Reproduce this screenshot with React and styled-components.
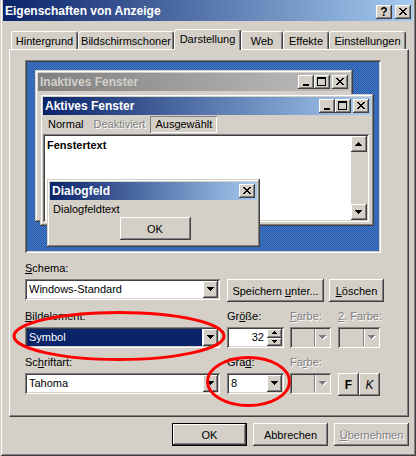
import React from "react";
import styled, { createGlobalStyle, css } from "styled-components";

const FACE = "#d4d0c8";
const NAVY = "#0a246a";

const GlobalStyle = createGlobalStyle`
  * { box-sizing: border-box; }
  html, body { margin: 0; padding: 0; background: ${FACE}; }
  body {
    font-family: "Liberation Sans", Arial, sans-serif;
    font-size: 11px;
    color: #000;
  }
`;

// classic 3d edges
const raised = css`
  background: ${FACE};
  box-shadow: inset -1px -1px #404040, inset 1px 1px #fff,
    inset -2px -2px #808080, inset 2px 2px ${FACE};
`;
const sunken = css`
  box-shadow: inset 1px 1px #808080, inset -1px -1px #fff,
    inset 2px 2px #404040, inset -2px -2px ${FACE};
`;
const frame = css`
  background: ${FACE};
  box-shadow: inset -1px -1px #404040, inset 1px 1px ${FACE},
    inset -2px -2px #808080, inset 2px 2px #fff;
`;
const disabledText = css`
  color: #808080;
  text-shadow: 1px 1px #fff;
`;

const Window = styled.div`
  position: relative;
  width: 416px;
  height: 456px;
  background: ${FACE};
  padding: 0 3px 3px;
  box-shadow: inset 1px 0 ${FACE}, inset -1px 0 #404040, inset 0 -1px #404040,
    inset 2px 0 #fff, inset -2px 0 #808080, inset 0 -2px #808080;
  display: flex;
  flex-direction: column;
  overflow: hidden;
`;

const Caption = styled.div`
  display: flex;
  align-items: center;
  flex: none;
  height: ${(p) => p.$h}px;
  padding: 0 2px 0 ${(p) => p.$pl}px;
  background: ${(p) =>
    p.$inactive
      ? "linear-gradient(to right, #808080, #c0c0c0)"
      : `linear-gradient(to right, ${NAVY}, #a6caf0)`};
  color: ${(p) => (p.$inactive ? FACE : "#fff")};
  font-weight: bold;
  font-size: 12px;
  white-space: nowrap;
  overflow: hidden;
`;

const CaptionText = styled.span`
  flex: 1;
  overflow: hidden;
`;

const CaptionButtons = styled.div`
  display: flex;
  align-self: ${(p) => (p.$bottom ? "flex-end" : "center")};
  margin-bottom: ${(p) => (p.$bottom ? 2 : 0)}px;
`;

const CapButton = styled.div`
  width: 16px;
  height: 14px;
  ${raised};
  display: flex;
  align-items: center;
  justify-content: center;
  margin-left: ${(p) => p.$gap || 0}px;
  color: #000;
  font-size: 12px;
  line-height: 1;
`;

const Body = styled.div`
  display: flex;
  flex-direction: column;
  padding: 8px 4px 0 6px;
`;

const TabStrip = styled.div`
  position: relative;
  z-index: 1;
  display: flex;
  align-items: flex-end;
  height: 20px;
  padding-left: 2px;
`;

const Tab = styled.div`
  width: ${(p) => p.$w}px;
  height: ${(p) => (p.$active ? 21 : 18)}px;
  margin-bottom: ${(p) => (p.$active ? -1 : 0)}px;
  padding-bottom: ${(p) => (p.$active ? 3 : 0)}px;
  background: ${FACE};
  border-top: 1px solid #fff;
  border-left: 1px solid #fff;
  border-right: 1px solid #404040;
  border-radius: 3px 3px 0 0;
  box-shadow: inset -1px 0 #808080;
  display: flex;
  align-items: center;
  justify-content: center;
  white-space: nowrap;
`;

const Panel = styled.div`
  height: 368px;
  background: ${FACE};
  border: 1px solid #404040;
  border-top-color: #fff;
  border-left-color: #fff;
  box-shadow: inset -1px -1px #808080;
  padding: 10px 0 0 15px;
`;

const Preview = styled.div`
  position: relative;
  width: 356px;
  height: 193px;
  background-color: #3468b8;
  background-image: repeating-conic-gradient(#2a5cab 0 25%, #4078c6 0 50%);
  background-size: 2px 2px;
  overflow: hidden;
  &::after {
    content: "";
    position: absolute;
    inset: 0;
    ${sunken};
    pointer-events: none;
  }
`;

const MiniWindow = styled.div`
  position: absolute;
  left: ${(p) => p.$x}px;
  top: ${(p) => p.$y}px;
  width: ${(p) => p.$w}px;
  height: ${(p) => p.$h}px;
  ${frame};
  padding: 3px;
  display: flex;
  flex-direction: column;
  overflow: hidden;
`;

const MenuBar = styled.div`
  display: flex;
  align-items: center;
  height: 19px;
  flex: none;
`;

const MenuItem = styled.span`
  padding: 2px 5px;
  line-height: 13px;
  ${(p) => p.$disabled && disabledText};
  ${(p) =>
    p.$selected &&
    css`
      box-shadow: inset 1px 1px #808080, inset -1px -1px #fff;
    `};
`;

const Client = styled.div`
  flex: 1;
  margin: 0 2px 1px 0;
  background: #fff;
  ${sunken};
  padding: 2px;
  display: flex;
`;

const ClientText = styled.div`
  flex: 1;
  font-weight: bold;
  padding: 3px 2px;
`;

const ScrollBar = styled.div`
  width: 16px;
  display: flex;
  flex-direction: column;
  justify-content: space-between;
  background: ${FACE};
`;

const ScrollButton = styled.div`
  width: 16px;
  height: 16px;
  ${raised};
  display: flex;
  align-items: center;
  justify-content: center;
`;

const DialogBody = styled.div`
  display: flex;
  flex-direction: column;
  padding: 3px 0 0 3px;
`;

const PushButton = styled.div`
  width: ${(p) => p.$w}px;
  height: 23px;
  flex: none;
  margin-left: ${(p) => p.$ml || 0}px;
  align-self: ${(p) => (p.$center ? "center" : "auto")};
  ${raised};
  ${(p) =>
    p.$default &&
    css`
      box-shadow: inset 0 0 0 1px #000, inset -2px -2px #404040,
        inset 2px 2px #fff, inset -3px -3px #808080;
    `};
  display: flex;
  align-items: center;
  justify-content: center;
  white-space: nowrap;
  ${(p) => p.$disabled && disabledText};
  font-weight: ${(p) => (p.$bold ? "bold" : "normal")};
  font-style: ${(p) => (p.$italic ? "italic" : "normal")};
  font-size: ${(p) => (p.$big ? 12 : 11)}px;
`;

const Row = styled.div`
  display: flex;
  align-items: flex-start;
  margin-top: ${(p) => p.$mt}px;
`;

const Field = styled.div`
  display: flex;
  flex-direction: column;
  width: ${(p) => p.$w}px;
  margin-left: ${(p) => p.$ml || 0}px;
`;

const Label = styled.div`
  height: 17px;
  line-height: 13px;
  white-space: nowrap;
  ${(p) => p.$disabled && disabledText};
`;

const Combo = styled.div`
  height: 21px;
  background: ${(p) => (p.$disabled ? FACE : "#fff")};
  ${sunken};
  padding: 2px;
  display: flex;
`;

const ComboText = styled.div`
  flex: 1;
  line-height: 17px;
  padding-left: 2px;
  margin-right: 1px;
  white-space: nowrap;
  ${(p) =>
    p.$selected &&
    css`
      background: ${NAVY};
      color: #fff;
    `};
`;

const DropButton = styled.div`
  width: 15px;
  height: 17px;
  flex: none;
  display: flex;
  align-items: center;
  justify-content: center;
  ${(p) =>
    p.$disabled
      ? css`
          box-shadow: inset 1px 0 #808080, inset 2px 0 #fff;
          padding-left: 2px;
        `
      : raised};
`;

const SpinValue = styled.div`
  flex: 1;
  text-align: right;
  line-height: 17px;
  padding-right: 3px;
`;

const SpinButtons = styled.div`
  width: 15px;
  display: flex;
  flex-direction: column;
`;

const SpinButton = styled.div`
  flex: 1;
  ${raised};
  display: flex;
  align-items: center;
  justify-content: center;
`;

const ButtonRow = styled.div`
  display: flex;
  justify-content: flex-end;
  gap: 6px;
  margin-top: 6px;
`;

const Annotations = styled.svg`
  position: absolute;
  left: 0;
  top: 0;
  pointer-events: none;
`;

const GLYPHS = {
  min: { w: 8, h: 9, d: "M1 7h6v2H1z" },
  max: { w: 9, h: 9, d: "M0 0h9v2H0z M0 2h1v7H0z M8 2h1v7H8z M1 8h7v1H1z" },
  close: {
    w: 8,
    h: 7,
    d: "M0 0h2v1H0z M6 0h2v1H6z M1 1h2v1H1z M5 1h2v1H5z M2 2h4v1H2z M3 3h2v1H3z M2 4h4v1H2z M1 5h2v1H1z M5 5h2v1H5z M0 6h2v1H0z M6 6h2v1H6z",
  },
  down: { w: 7, h: 4, d: "M0 0h7v1H0z M1 1h5v1H1z M2 2h3v1H2z M3 3h1v1H3z" },
  up: { w: 7, h: 4, d: "M3 0h1v1H3z M2 1h3v1H2z M1 2h5v1H1z M0 3h7v1H0z" },
  smallUp: { w: 5, h: 3, d: "M2 0h1v1H2z M1 1h3v1H1z M0 2h5v1H0z" },
  smallDown: { w: 5, h: 3, d: "M0 0h5v1H0z M1 1h3v1H1z M2 2h1v1H2z" },
};

function Glyph({ kind, disabled }) {
  const g = GLYPHS[kind];
  return (
    <svg width={g.w + 1} height={g.h + 1} viewBox={`0 0 ${g.w + 1} ${g.h + 1}`} shapeRendering="crispEdges">
      {disabled && <path d={g.d} fill="#fff" transform="translate(1 1)" />}
      <path d={g.d} fill={disabled ? "#808080" : "#000"} />
    </svg>
  );
}

function ComboBox({ text, selected, disabled }) {
  return (
    <Combo $disabled={disabled}>
      <ComboText $selected={selected}>{text}</ComboText>
      <DropButton $disabled={disabled}>
        <Glyph kind="down" disabled={disabled} />
      </DropButton>
    </Combo>
  );
}

const TABS = [
  ["Hintergrund", 67],
  ["Bildschirmschoner", 96],
  ["Darstellung", 67, true],
  ["Web", 42],
  ["Effekte", 46],
  ["Einstellungen", 77],
];

export default function App() {
  return (
    <>
      <GlobalStyle />
      <Window>
        <Caption $h={21} $pl={2}>
          <CaptionText>Eigenschaften von Anzeige</CaptionText>
          <CaptionButtons $bottom>
            <CapButton>
              <b>?</b>
            </CapButton>
            <CapButton $gap={3}>
              <Glyph kind="close" />
            </CapButton>
          </CaptionButtons>
        </Caption>

        <Body>
          <TabStrip>
            {TABS.map(([label, w, active]) => (
              <Tab key={label} $w={w} $active={active}>
                {label}
              </Tab>
            ))}
          </TabStrip>

          <Panel>
            <Preview>
              <MiniWindow $x={10} $y={10} $w={318} $h={152}>
                <Caption $h={18} $pl={2} $inactive>
                  <CaptionText>Inaktives Fenster</CaptionText>
                  <CaptionButtons>
                    <CapButton>
                      <Glyph kind="min" />
                    </CapButton>
                    <CapButton>
                      <Glyph kind="max" />
                    </CapButton>
                    <CapButton $gap={2}>
                      <Glyph kind="close" />
                    </CapButton>
                  </CaptionButtons>
                </Caption>
              </MiniWindow>

              <MiniWindow $x={15} $y={34} $w={334} $h={132}>
                <Caption $h={18} $pl={2}>
                  <CaptionText>Aktives Fenster</CaptionText>
                  <CaptionButtons>
                    <CapButton>
                      <Glyph kind="min" />
                    </CapButton>
                    <CapButton>
                      <Glyph kind="max" />
                    </CapButton>
                    <CapButton $gap={2}>
                      <Glyph kind="close" />
                    </CapButton>
                  </CaptionButtons>
                </Caption>
                <MenuBar>
                  <MenuItem>Normal</MenuItem>
                  <MenuItem $disabled>Deaktiviert</MenuItem>
                  <MenuItem $selected>Ausgewählt</MenuItem>
                </MenuBar>
                <Client>
                  <ClientText>Fenstertext</ClientText>
                  <ScrollBar>
                    <ScrollButton>
                      <Glyph kind="up" />
                    </ScrollButton>
                    <ScrollButton>
                      <Glyph kind="down" />
                    </ScrollButton>
                  </ScrollBar>
                </Client>
              </MiniWindow>

              <MiniWindow $x={22} $y={119} $w={213} $h={68}>
                <Caption $h={18} $pl={2}>
                  <CaptionText>Dialogfeld</CaptionText>
                  <CaptionButtons>
                    <CapButton>
                      <Glyph kind="close" />
                    </CapButton>
                  </CaptionButtons>
                </Caption>
                <DialogBody>
                  <span>Dialogfeldtext</span>
                  <PushButton $w={71} $center style={{ marginTop: 2 }}>
                    OK
                  </PushButton>
                </DialogBody>
              </MiniWindow>
            </Preview>

            <Row $mt={9}>
              <Field $w={195}>
                <Label>
                  <u>S</u>chema:
                </Label>
                <ComboBox text="Windows-Standard" />
              </Field>
              <Field $w={97} $ml={7}>
                <Label />
                <PushButton $w={97}>
                  Speichern&nbsp;<u>u</u>nter...
                </PushButton>
              </Field>
              <Field $w={55} $ml={5}>
                <Label />
                <PushButton $w={55}>
                  <u>L</u>öschen
                </PushButton>
              </Field>
            </Row>

            <Row $mt={8}>
              <Field $w={195}>
                <Label>
                  <u>B</u>ildelement:
                </Label>
                <ComboBox text="Symbol" selected />
              </Field>
              <Field $w={57} $ml={7}>
                <Label>
                  Gr<u>ö</u>ße:
                </Label>
                <Combo>
                  <SpinValue>32</SpinValue>
                  <SpinButtons>
                    <SpinButton>
                      <Glyph kind="smallUp" />
                    </SpinButton>
                    <SpinButton>
                      <Glyph kind="smallDown" />
                    </SpinButton>
                  </SpinButtons>
                </Combo>
              </Field>
              <Field $w={41} $ml={6}>
                <Label $disabled>
                  <u>F</u>arbe:
                </Label>
                <ComboBox disabled />
              </Field>
              <Field $w={42} $ml={7}>
                <Label $disabled>
                  <u>2</u>. Farbe:
                </Label>
                <ComboBox disabled />
              </Field>
            </Row>

            <Row $mt={8}>
              <Field $w={195}>
                <Label>
                  Sc<u>h</u>riftart:
                </Label>
                <ComboBox text="Tahoma" />
              </Field>
              <Field $w={57} $ml={7}>
                <Label>
                  Gra<u>d</u>:
                </Label>
                <ComboBox text="8" />
              </Field>
              <Field $w={41} $ml={6}>
                <Label $disabled>
                  Fa<u>r</u>be:
                </Label>
                <ComboBox disabled />
              </Field>
              <Field $w={21} $ml={7}>
                <Label />
                <PushButton $w={21} $bold $big>
                  F
                </PushButton>
              </Field>
              <Field $w={21}>
                <Label />
                <PushButton $w={21} $italic $big>
                  K
                </PushButton>
              </Field>
            </Row>
          </Panel>

          <ButtonRow>
            <PushButton $w={75} $default>
              OK
            </PushButton>
            <PushButton $w={75}>Abbrechen</PushButton>
            <PushButton $w={75} $disabled>
              <u>Ü</u>bernehmen
            </PushButton>
          </ButtonRow>
        </Body>

        <Annotations width="416" height="456" viewBox="0 0 416 456">
          <ellipse cx="119" cy="336" rx="105" ry="23.5" fill="none" stroke="#ff0000" strokeWidth="3" />
          <ellipse cx="248.5" cy="381.5" rx="41" ry="24" fill="none" stroke="#ff0000" strokeWidth="3" />
        </Annotations>
      </Window>
    </>
  );
}
